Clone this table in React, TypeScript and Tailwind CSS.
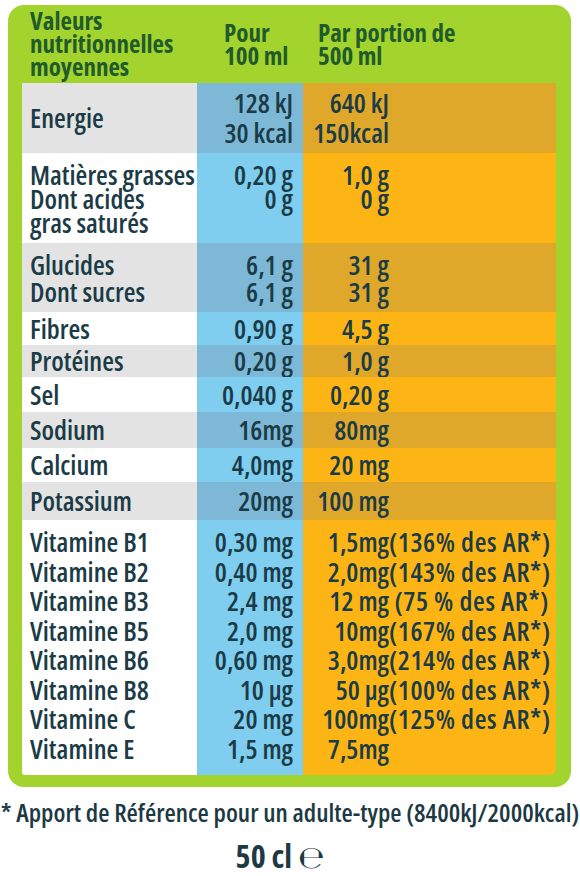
import React from 'react';

type Amount = { v: string; ar?: string };

type RowProps = {
  shade?: boolean;
  box: string; // height + line-height of the row
  pad?: string; // top padding of the text cells
  labelCenter?: boolean;
  label: string[];
  pour: string[];
  par: Amount[];
  last?: boolean;
};

function Row({ shade, box, pad = '', labelCenter, label, pour, par, last }: RowProps) {
  return (
    <div className={`flex ${box}`}>
      <div
        className={`w-[175px] shrink-0 pl-2 ${shade ? 'bg-[#e3e3e3]' : 'bg-white'} ${
          labelCenter ? 'flex flex-col justify-center' : pad
        } ${last ? 'rounded-bl-[3px]' : ''}`}
      >
        {label.map((l) => (
          <div key={l} className="whitespace-nowrap">
            {l}
          </div>
        ))}
      </div>
      <div className={`w-[106px] shrink-0 pr-[10px] text-right ${shade ? 'bg-[#7db8d6]' : 'bg-[#7fcdef]'} ${pad}`}>
        {pour.map((p) => (
          <div key={p} className="whitespace-nowrap">
            {p}
          </div>
        ))}
      </div>
      <div
        className={`flex-1 min-w-0 ${shade ? 'bg-[#e0a82b]' : 'bg-[#fdb515]'} ${pad} ${
          last ? 'rounded-br-[6px]' : ''
        }`}
      >
        {par.map((p) => (
          <div key={p.v} className="flex whitespace-nowrap">
            <span className="w-[86px] shrink-0 text-right">{p.v}</span>
            {p.ar && <span className="font-stretch-[86%] tracking-[0.6px]">{p.ar}</span>}
          </div>
        ))}
      </div>
    </div>
  );
}

export default function App() {
  return (
    <div className="w-[580px] h-[876px] overflow-hidden bg-white font-['Open_Sans',sans-serif] font-stretch-[82%] font-semibold text-[#1b3b46]">
      {/* green frame */}
      <div className="ml-[8px] w-[563px] h-[782px] mt-[5px] rounded-[16px] bg-[#a3d32d] pl-[14px] pr-[15px]">
        {/* header */}
        <div className="flex h-[78px] text-[25px] leading-[23px] font-bold text-[#1f5b2b]">
          <div className="w-[175px] shrink-0 pl-2 pt-[4px]">
            <div>Valeurs</div>
            <div>nutritionnelles</div>
            <div>moyennes</div>
          </div>
          <div className="w-[106px] shrink-0 pl-[27px] pt-[16px]">
            <div>Pour</div>
            <div className="whitespace-nowrap">100 ml</div>
          </div>
          <div className="flex-1 pl-[15px] pt-[16px]">
            <div>Par portion de</div>
            <div>500 ml</div>
          </div>
        </div>

        {/* table */}
        <div className="text-[27px]">
          <Row
            shade
            box="h-[70px] leading-[30px]"
            pad="pt-[5px]"
            labelCenter
            label={['Energie']}
            pour={['128 kJ', '30 kcal']}
            par={[{ v: '640 kJ' }, { v: '150kcal' }]}
          />
          <Row
            box="h-[90px] leading-[24px]"
            pad="pt-[10px]"
            label={['Matières grasses', 'Dont acides', 'gras saturés']}
            pour={['0,20 g', '0 g']}
            par={[{ v: '1,0 g' }, { v: '0 g ' }]}
          />
          <Row
            shade
            box="h-[69px] leading-[27px]"
            pad="pt-[8px]"
            label={['Glucides', 'Dont sucres']}
            pour={['6,1 g', '6,1 g ']}
            par={[{ v: '31 g' }, { v: '31 g ' }]}
          />
          <Row box="h-[33px] leading-[33px]" label={['Fibres']} pour={['0,90 g']} par={[{ v: '4,5 g' }]} />
          <Row shade box="h-[32px] leading-[32px]" label={['Protéines']} pour={['0,20 g']} par={[{ v: '1,0 g' }]} />
          <Row box="h-[35px] leading-[35px]" label={['Sel']} pour={['0,040 g']} par={[{ v: '0,20 g' }]} />
          <Row shade box="h-[36px] leading-[36px]" label={['Sodium']} pour={['16mg']} par={[{ v: '80mg' }]} />
          <Row box="h-[34px] leading-[34px]" label={['Calcium']} pour={['4,0mg']} par={[{ v: '20 mg' }]} />
          <Row shade box="h-[38px] leading-[38px]" label={['Potassium']} pour={['20mg']} par={[{ v: '100 mg' }]} />
          <Row
            last
            box="h-[255px] leading-[29.5px]"
            pad="pt-[7px]"
            label={[
              'Vitamine B1',
              'Vitamine B2',
              'Vitamine B3',
              'Vitamine B5',
              'Vitamine B6',
              'Vitamine B8',
              'Vitamine C',
              'Vitamine E',
            ]}
            pour={['0,30 mg', '0,40 mg', '2,4 mg', '2,0 mg', '0,60 mg', '10 µg', '20 mg', '1,5 mg']}
            par={[
              { v: '1,5mg', ar: '(136% des AR*)' },
              { v: '2,0mg', ar: '(143% des AR*)' },
              { v: '12 mg', ar: '\u00a0(75 % des AR*)' },
              { v: '10mg', ar: '(167% des AR*)' },
              { v: '3,0mg', ar: '(214% des AR*)' },
              { v: '50 µg', ar: '(100% des AR*)' },
              { v: '100mg', ar: '(125% des AR*)' },
              { v: '7,5mg' },
            ]}
          />
        </div>
      </div>

      {/* footer */}
      <div className="mt-[10px] text-center text-[25.8px] leading-[30px] font-stretch-[75%] text-[#1d3a44] whitespace-nowrap">
        * Apport de Référence pour un adulte-type (8400kJ/2000kcal)
      </div>
      <div className="mt-[12px] pr-[20px] flex items-baseline justify-center gap-[6px] text-[#1d3a44]">
        <span className="text-[32px] leading-[34px] font-bold font-stretch-[75%]">50 cl</span>
        <span className="font-['DejaVu_Sans',sans-serif] font-extralight text-[31px] leading-[34px]">℮</span>
      </div>
    </div>
  );
}
